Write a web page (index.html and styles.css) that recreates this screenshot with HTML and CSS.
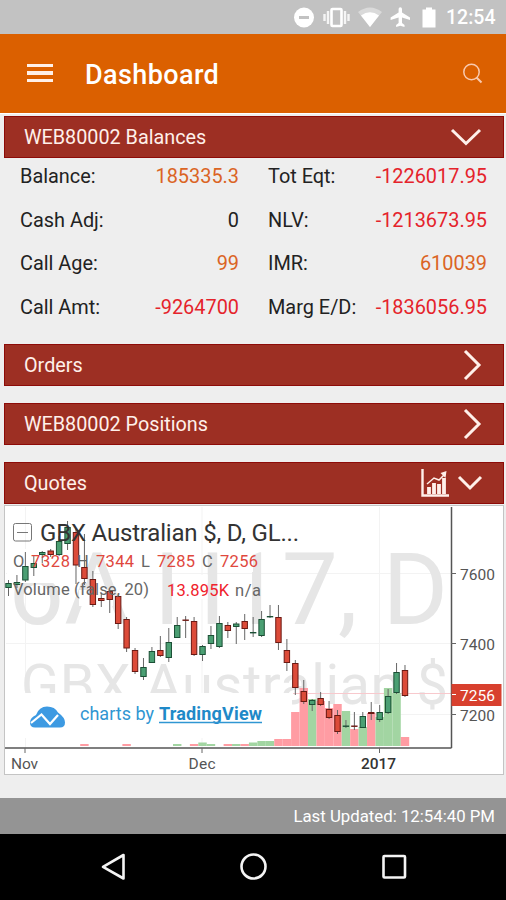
FILE: index.html
```
<!DOCTYPE html>
<html lang="en">
<head>
  <meta charset="UTF-8">
  <title>Dashboard</title>
  <link rel="stylesheet" href="styles.css">
</head>
<body>
  <!-- Status bar -->
  <div class="status-bar">
    <svg width="150" height="34" viewBox="290 0 150 34" fill="#fff">
      <circle cx="304" cy="17.500" r="10"/>
      <rect x="299" y="16" width="10" height="3" fill="#c2c2c2"/>
      <rect x="331.500" y="9" width="10" height="17" rx="1" fill="none" stroke="#fff" stroke-width="2.600"/>
      <path d="M328 11v13M345 11v13M324.500 14v7M348.500 14v7" stroke="#fff" stroke-width="2.400" opacity=".85"/>
      <path d="M358 12Q370 3 382 12L370 27Z" opacity=".4"/>
      <path d="M361 15.500Q370 9 379 15.500L370 27Z"/>
      <path d="M410 20v-2.500l-8-5V9a1.700 1.700 0 0 0-3.400 0v3.500l-8 5V20l8-2.500v5.500l-2.500 2v2l4.200-1.300 4.200 1.300v-2l-2.500-2v-5.500Z"/>
      <path d="M426 7.500h6v2h3.500v18h-13v-18h3.500Z"/>
    </svg>
    <span class="clock">12:54</span>
  </div>

  <!-- Header -->
  <header class="app-bar">
    <div class="menu"><i></i><i></i><i></i></div>
    <h1>Dashboard</h1>
    <svg class="search" width="22" height="22" viewBox="0 0 22 22" fill="none" stroke="#f9c9ae" stroke-width="1.500">
      <circle cx="9.500" cy="9" r="7.700"/>
      <path d="M14.500 14.500l5 5" stroke-width="2"/>
    </svg>
  </header>

  <main>
    <!-- Balances -->
    <div class="panel-head">
      <span>WEB80002 Balances</span>
      <svg class="down" width="32" height="20" viewBox="0 0 32 20"><path d="M2 3l14 13.500L30 3"/></svg>
    </div>
    <div class="balances">
      <span>Balance:</span><b class="warn">185335.3</b>
      <span>Tot Eqt:</span><b class="neg">-1226017.95</b>
      <span>Cash Adj:</span><b>0</b>
      <span>NLV:</span><b class="neg">-1213673.95</b>
      <span>Call Age:</span><b class="warn">99</b>
      <span>IMR:</span><b class="warn">610039</b>
      <span>Call Amt:</span><b class="neg">-9264700</b>
      <span>Marg E/D:</span><b class="neg">-1836056.95</b>
    </div>

    <!-- Orders -->
    <div class="panel-head">
      <span>Orders</span>
      <svg class="right" width="20" height="32" viewBox="0 0 20 32"><path d="M3 2l14 14L3 30"/></svg>
    </div>

    <!-- Positions -->
    <div class="panel-head">
      <span>WEB80002 Positions</span>
      <svg class="right" width="20" height="32" viewBox="0 0 20 32"><path d="M3 2l14 14L3 30"/></svg>
    </div>

    <!-- Quotes -->
    <div class="panel-head quotes">
      <span>Quotes</span>
      <svg class="bars" width="28" height="28" viewBox="0 0 28 28">
        <path d="M1.500 0v26.500H28" stroke-width="2.400"/>
        <path d="M8 18v7M13 14v11M18 15v10M23 9v16" stroke-width="3.800"/>
        <path d="M6 15l7-6 5 2 6-6" stroke-width="1.500"/>
        <path d="M19.500 4l6-2-1 7Z" stroke="none" fill="#fff0ea"/>
      </svg>
      <svg class="small-down" width="26" height="16" viewBox="0 0 26 16"><path d="M2 2l11 11L24 2"/></svg>
    </div>
    <div class="chart">
      <svg id="chart" width="497" height="268" viewBox="5 506 497 268">
        <g stroke="#f3f3f3">
          <path d="M25.500 507v241M202 507v241M379.500 507v241M6 573.500h445M6 643.500h445M6 714.500h445"/>
        </g>
        <g fill="#e6e6e6">
          <text x="8" y="624" font-size="100" textLength="440">6A H17, D</text>
          <text x="21" y="704" font-size="56" textLength="427">GBX Australian $</text>
        </g>
        <!-- legend and branding backgrounds -->
        <g fill="#fff">
          <rect x="7" y="549" width="80" height="34"/>
          <rect x="79" y="590" width="34" height="16"/>
          <rect x="174" y="575" width="33.500" height="24"/>
          <rect x="225" y="549" width="28" height="23"/>
          <rect x="6" y="693" width="286" height="45"/>
        </g>
        <path d="M293 693.500h158" stroke="#f8c9cd"/>
        <g id="volume"></g>
        <g id="candles"></g>
        <path d="M451.500 507v241M5 748h446.500" stroke="#555" stroke-width="1.500" fill="none"/>
        <path d="M25 748v5M202 748v5M379.500 748v5M451 573.500h5M451 643.500h5M451 714.500h5" stroke="#666"/>

        <rect x="13.500" y="523.500" width="18" height="17.500" rx="2" fill="none" stroke="#777"/>
        <path d="M17 532.500h11" stroke="#777"/>
        <text x="40" y="541" font-size="24" textLength="259" fill="#333">GBX Australian $, D, GL...</text>
        <g font-size="16.500" fill="#666">
          <text x="13" y="567">O</text>
          <text x="31" y="567" textLength="39" class="quote">7328</text>
          <text x="77" y="567">H</text>
          <text x="96" y="567" textLength="38" class="quote">7344</text>
          <text x="141" y="567">L</text>
          <text x="157" y="567" textLength="38" class="quote">7285</text>
          <text x="202" y="567">C</text>
          <text x="220" y="567" textLength="38" class="quote">7256</text>
          <text x="13" y="595" textLength="136">Volume (false, 20)</text>
          <text x="167" y="596" textLength="62" fill="#f0222c">13.895K</text>
          <text x="235" y="596" textLength="26">n/a</text>
        </g>

        <!-- brand -->
        <path d="M35 727.500q-5 0-5-5 0-5 6-7.500 3-8.500 11-8.500 8 0 11 6 7 5 7 10 0 5-5 5Z" fill="#3d9ae2"/>
        <path d="M31 723l10.500-8.500 8.500 9.500 8-9" fill="none" stroke="#fff" stroke-width="2.200"/>
        <text x="80" y="720" font-size="18" textLength="74" fill="#3096d2">charts by</text>
        <text x="159" y="720" font-size="18" textLength="103" font-weight="700" fill="#1f89c8">TradingView</text>
        <path d="M159 722.500h103" stroke="#3096d2" stroke-width="1.500"/>

        <g font-size="15.500" fill="#555">
          <text x="460" y="579.500" textLength="35">7600</text>
          <text x="460" y="649.500" textLength="35">7400</text>
          <text x="460" y="720.500" textLength="35">7200</text>
          <text x="11" y="768.500" textLength="27">Nov</text>
          <text x="188.500" y="768.500" textLength="27">Dec</text>
          <text x="361" y="768.500" textLength="35" font-weight="500" fill="#333">2017</text>
        </g>
        <rect x="451.500" y="684" width="50" height="22" fill="#d8402e"/>
        <path d="M452 694.500h4" stroke="#fff"/>
        <text x="460" y="701" font-size="15.500" textLength="35" fill="#fff">7256</text>
      </svg>
    </div>
  </main>

  <div class="updated">Last Updated: 12:54:40 PM</div>

  <!-- Navigation bar -->
  <nav>
    <svg width="506" height="66" viewBox="0 834 506 66" fill="none" stroke="#f4f4f4" stroke-width="2.600">
      <path d="M123.500 855v23.500L103 866.800Z" stroke-linejoin="round"/>
      <circle cx="253.500" cy="866.500" r="12"/>
      <rect x="383.500" y="856" width="21.500" height="21.500" rx="1"/>
    </svg>
  </nav>

  <script>
    // color, high, body top, body bottom, low
    const candles = [
      ["g", 580, 583, 588, 596], ["g", 575, 582, 585, 588], ["g", 552, 566, 580.5, 582],
      ["g", 556, 563, 568, 576], ["g", 551, 552, 555, 563], ["r", 549, 550.5, 555, 557],
      ["g", 536, 541, 555, 556], ["g", 521, 527, 544, 550], ["r", 529, 532, 565.5, 584],
      ["r", 534, 567, 579, 585], ["r", 571, 579, 605, 607], ["r", 593, 598, 601, 607],
      ["r", 590, 591, 600, 613], ["r", 594, 596, 624, 629], ["r", 617, 619, 648.5, 652],
      ["r", 648, 650, 672, 674], ["g", 658, 667, 677, 680], ["g", 647, 651, 663, 663],
      ["r", 636, 650, 656, 657], ["g", 628, 642, 658, 662], ["g", 617, 625, 638, 638],
      ["r", 616, 619.5, 620.5, 638], ["r", 617, 621, 655, 656], ["g", 645, 646, 655, 661],
      ["g", 626, 635, 644, 649], ["g", 616, 623, 647, 648], ["r", 622, 625, 631, 638],
      ["g", 622, 623.5, 627, 644], ["r", 614, 621, 629, 640], ["g", 617, 632, 633, 637],
      ["g", 611, 619, 636, 637], ["g", 605, 616, 617, 618], ["r", 605, 617, 643, 650],
      ["r", 639, 650, 663, 671], ["r", 660, 663, 688, 695], ["r", 680, 691, 702, 704],
      ["g", 699, 700, 705, 711], ["r", 692, 698, 705, 706], ["r", 701, 709, 718, 719],
      ["r", 710, 715, 732, 734], ["g", 720, 725.5, 726, 728], ["r", 712, 725.5, 726, 730],
      ["g", 712, 716, 728, 728], ["r", 702, 712, 714, 720], ["g", 705, 712, 720, 722],
      ["g", 689, 696, 713, 714], ["g", 663, 672, 693, 694], ["r", 665, 670, 696, 697]
    ];
    // candle index: height of the volume bar
    const volume = {
      9: 2, 14: 2, 20: 2, 22: 2, 23: 3.5, 24: 2, 26: 2, 27: 2, 28: 2, 29: 3.5, 30: 5, 31: 5,
      32: 7, 33: 7, 34: 34, 35: 58, 36: 47, 37: 45, 38: 38, 39: 42, 40: 35,
      41: 17, 42: 19, 43: 33, 44: 29, 45: 58, 46: 53, 47: 9
    };
    const step = 8.436;
    let bars = "";
    let sticks = "";

    candles.forEach(([color, high, top, bottom, low], i) => {
      const x = 8.5 + i * step;
      if (volume[i]) {
        bars += `<rect class="vol-${color}" x="${x - step / 2}" y="${746 - volume[i]}" width="${step}" height="${volume[i]}"/>`;
      }
      sticks += `<path class="wick" d="M${x} ${high}V${low}"/>
        <rect class="candle-${color}" x="${x - 2.7}" y="${top + 0.5}" width="5.4" height="${Math.max(bottom - top - 1, 0.4)}"/>`;
    });

    document.getElementById("volume").innerHTML = bars;
    document.getElementById("candles").innerHTML = sticks;
  </script>
</body>
</html>
```
FILE: styles.css
```
* {
  box-sizing: border-box;
}
body {
  margin: 0;
  width: 506px;
  height: 900px;
  display: flex;
  flex-direction: column;
  font-family: Roboto, sans-serif;
  background: #eeeeee;
  overflow: hidden;
}
svg {
  display: block;
  flex: none;
}
.status-bar {
  height: 34px;
  background: #c2c2c2;
  display: flex;
  justify-content: flex-end;
  align-items: center;
  padding-right: 10px;
  color: #fff;
}
.clock {
  width: 50px;
  margin-left: 6px;
  font-size: 19.5px;
  font-weight: 500;
  line-height: 34px;
  padding-top: 2px;
}
.app-bar {
  height: 79px;
  background: #db6000;
  display: flex;
  align-items: center;
  padding: 0 22px 0 27px;
  color: #fff;
}
.menu {
  width: 26px;
  display: flex;
  flex-direction: column;
  gap: 4px;
  margin-top: -1px;
}
.menu i {
  height: 3.5px;
  background: #fff0e8;
}
h1 {
  margin: 2px auto 0 32px;
  font-size: 27px;
  font-weight: 500;
  letter-spacing: 0.4px;
}
main {
  padding: 2px 2px 0 4px;
  border-top: 1px solid #fff;
  height: 685px;
}
.panel-head {
  height: 42px;
  margin-bottom: 17px;
  padding: 0 19px 0 19px;
  border: 1px solid #8d0b08;
  background: #9d2f23;
  color: #fff0ea;
  display: flex;
  align-items: center;
  font-size: 19.8px;
}
.panel-head span {
  margin-right: auto;
}
.panel-head svg {
  fill: none;
  stroke: #fff0ea;
  stroke-width: 3;
}
.panel-head .down {
  margin-right: 2px;
}
.panel-head .right {
  margin-right: 2px;
}
.panel-head.quotes {
  margin-bottom: 1px;
}
.panel-head .bars {
  margin-right: 8px;
}
.panel-head .small-down {
  margin-right: 1px;
}
.balances {
  display: grid;
  grid-template-columns: 80px 139px 124px 124px;
  grid-auto-rows: 43.5px;
  margin: -18px 0 12px;
  padding-left: 16px;
  height: 175px;
  font-size: 19.9px;
  line-height: 39px;
  color: #222;
  white-space: nowrap;
}
.balances span:nth-child(4n + 3) {
  padding-left: 29px;
}
.balances b {
  font-weight: 400;
  text-align: right;
}
.balances .warn {
  color: #db6424;
}
.balances .neg {
  color: #e5232b;
}
.chart {
  border: 1px solid #c4c4c4;
  height: 270px;
  background: #fff;
}
.quote {
  fill: #e0483e;
}
.vol-g {
  fill: #a2d5a2;
}
.vol-r {
  fill: #ff9ca3;
}
.wick {
  stroke: #666;
  stroke-width: 1;
}
.candle-g {
  fill: #4b9f73;
  stroke: #1b4f35;
}
.candle-r {
  fill: #dc4b39;
  stroke: #6b1913;
}
.updated {
  height: 36px;
  background: #949494;
  color: #fff;
  font-size: 16.8px;
  line-height: 37px;
  text-align: right;
  padding-right: 11px;
}
nav {
  height: 66px;
  background: #000;
}
```
